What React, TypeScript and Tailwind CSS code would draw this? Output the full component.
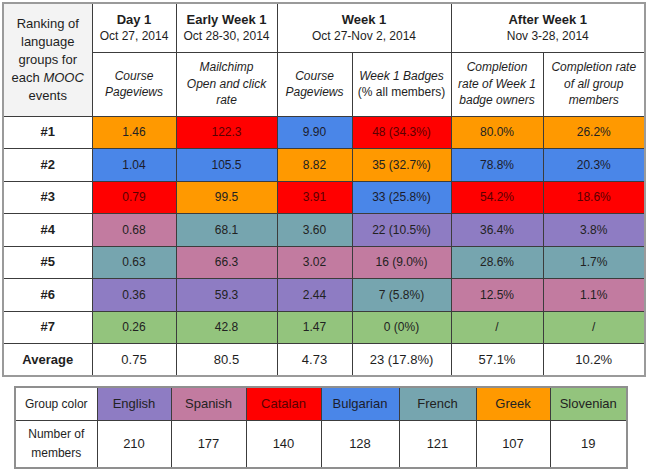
import React from "react";

type C = "o" | "r" | "b" | "p" | "t" | "u" | "g";

const BG: Record<C, string> = {
  o: "bg-[#ff9900] text-[#222]",
  r: "bg-[#ff0000] text-[#5a0000]",
  b: "bg-[#4a86e8] text-[#1c1c2c]",
  p: "bg-[#c27ba0] text-[#222]",
  t: "bg-[#76a5af] text-[#222]",
  u: "bg-[#8e7cc3] text-[#222]",
  g: "bg-[#93c47d] text-[#222]",
};

const ROWS: { rank: string; h: string; cells: [C, string][] }[] = [
  { rank: "#1", h: "h-[32px]", cells: [["o", "1.46"], ["r", "122.3"], ["b", "9.90"], ["r", "48 (34.3%)"], ["o", "80.0%"], ["o", "26.2%"]] },
  { rank: "#2", h: "h-[33px]", cells: [["b", "1.04"], ["b", "105.5"], ["o", "8.82"], ["o", "35 (32.7%)"], ["b", "78.8%"], ["b", "20.3%"]] },
  { rank: "#3", h: "h-[32px]", cells: [["r", "0.79"], ["o", "99.5"], ["r", "3.91"], ["b", "33 (25.8%)"], ["r", "54.2%"], ["r", "18.6%"]] },
  { rank: "#4", h: "h-[33px]", cells: [["p", "0.68"], ["t", "68.1"], ["t", "3.60"], ["u", "22 (10.5%)"], ["u", "36.4%"], ["u", "3.8%"]] },
  { rank: "#5", h: "h-[32px]", cells: [["t", "0.63"], ["p", "66.3"], ["p", "3.02"], ["p", "16 (9.0%)"], ["t", "28.6%"], ["t", "1.7%"]] },
  { rank: "#6", h: "h-[33px]", cells: [["u", "0.36"], ["u", "59.3"], ["u", "2.44"], ["t", "7 (5.8%)"], ["p", "12.5%"], ["p", "1.1%"]] },
  { rank: "#7", h: "h-[32px]", cells: [["g", "0.26"], ["g", "42.8"], ["g", "1.47"], ["g", "0 (0%)"], ["g", "/"], ["g", "/"]] },
];

const AVG = ["0.75", "80.5", "4.73", "23 (17.8%)", "57.1%", "10.2%"];

const GROUPS: [C, string, string][] = [
  ["u", "English", "210"],
  ["p", "Spanish", "177"],
  ["r", "Catalan", "140"],
  ["b", "Bulgarian", "128"],
  ["t", "French", "121"],
  ["o", "Greek", "107"],
  ["g", "Slovenian", "19"],
];

const cell = "border border-[#3c3c3c] text-center align-middle p-0";

export default function App() {
  return (
    <div className="w-[648px] h-[471px] bg-white overflow-hidden font-['Liberation_Sans',Arial,sans-serif] text-[#1e1e1e]">
      <div className="pl-[2px] pt-[2px]">
        <table className="table-fixed border-collapse w-[644px] border-2 border-[#9a9a9a]">
          <colgroup>
            <col className="w-[89px]" />
            <col className="w-[84px]" />
            <col className="w-[101px]" />
            <col className="w-[75px]" />
            <col className="w-[99px]" />
            <col className="w-[92px]" />
            <col className="w-[102px]" />
          </colgroup>
          <thead>
            <tr className="h-[49px]">
              <th rowSpan={2} className={`${cell} bg-[#f3f3f3] font-normal text-[13px] leading-[18px] px-1`}>
                Ranking of language groups for each <i>MOOC</i> events
              </th>
              <th className={`${cell} leading-[16px]`}>
                <div className="text-[13px] font-bold">Day 1</div>
                <div className="text-[12px] font-normal">Oct 27, 2014</div>
              </th>
              <th className={`${cell} leading-[16px]`}>
                <div className="text-[13px] font-bold">Early Week 1</div>
                <div className="text-[12px] font-normal">Oct 28-30, 2014</div>
              </th>
              <th colSpan={2} className={`${cell} leading-[16px]`}>
                <div className="text-[13px] font-bold">Week 1</div>
                <div className="text-[12px] font-normal">Oct 27-Nov 2, 2014</div>
              </th>
              <th colSpan={2} className={`${cell} leading-[16px]`}>
                <div className="text-[13px] font-bold">After Week 1</div>
                <div className="text-[12px] font-normal">Nov 3-28, 2014</div>
              </th>
            </tr>
            <tr className="h-[64px] text-[12px] leading-[16.5px] font-normal">
              <th className={`${cell} font-normal italic px-2`}>Course Pageviews</th>
              <th className={`${cell} font-normal italic px-2`}>Mailchimp Open and click rate</th>
              <th className={`${cell} font-normal italic px-1`}>Course Pageviews</th>
              <th className={`${cell} font-normal px-1`}>
                <i>Week 1 Badges</i>
                <br />
                (% all members)
              </th>
              <th className={`${cell} font-normal italic px-1`}>Completion rate of Week 1 badge owners</th>
              <th className={`${cell} font-normal italic px-1`}>Completion rate of all group members</th>
            </tr>
          </thead>
          <tbody className="text-[12px]">
            {ROWS.map((r) => (
              <tr key={r.rank} className={r.h}>
                <td className={`${cell} font-bold text-[13px] bg-white`}>{r.rank}</td>
                {r.cells.map(([c, v], i) => (
                  <td key={i} className={`${cell} ${BG[c]}`}>
                    {v}
                  </td>
                ))}
              </tr>
            ))}
            <tr className="h-[33px] text-[13px]">
              <td className={`${cell} font-bold`}>Average</td>
              {AVG.map((v, i) => (
                <td key={i} className={cell}>
                  {v}
                </td>
              ))}
            </tr>
          </tbody>
        </table>
      </div>

      <div className="pl-[14px] pt-[9px]">
        <table className="table-fixed border-collapse w-[613px] border-2 border-[#8f8f8f] text-[12px]">
          <colgroup>
            <col className="w-[82px]" />
            <col className="w-[74px]" />
            <col className="w-[75px]" />
            <col className="w-[75px]" />
            <col className="w-[78px]" />
            <col className="w-[77px]" />
            <col className="w-[74px]" />
            <col className="w-[77px]" />
          </colgroup>
          <tbody>
            <tr className="h-[33px]">
              <td className={cell}>Group color</td>
              {GROUPS.map(([c, name]) => (
                <td key={name} className={`${cell} ${BG[c]} text-[13px]`}>
                  {name}
                </td>
              ))}
            </tr>
            <tr className="h-[48px]">
              <td className={`${cell} leading-[19px]`}>
                Number of
                <br />
                members
              </td>
              {GROUPS.map(([, name, n]) => (
                <td key={name} className={`${cell} text-[13px]`}>
                  {n}
                </td>
              ))}
            </tr>
          </tbody>
        </table>
      </div>
    </div>
  );
}
